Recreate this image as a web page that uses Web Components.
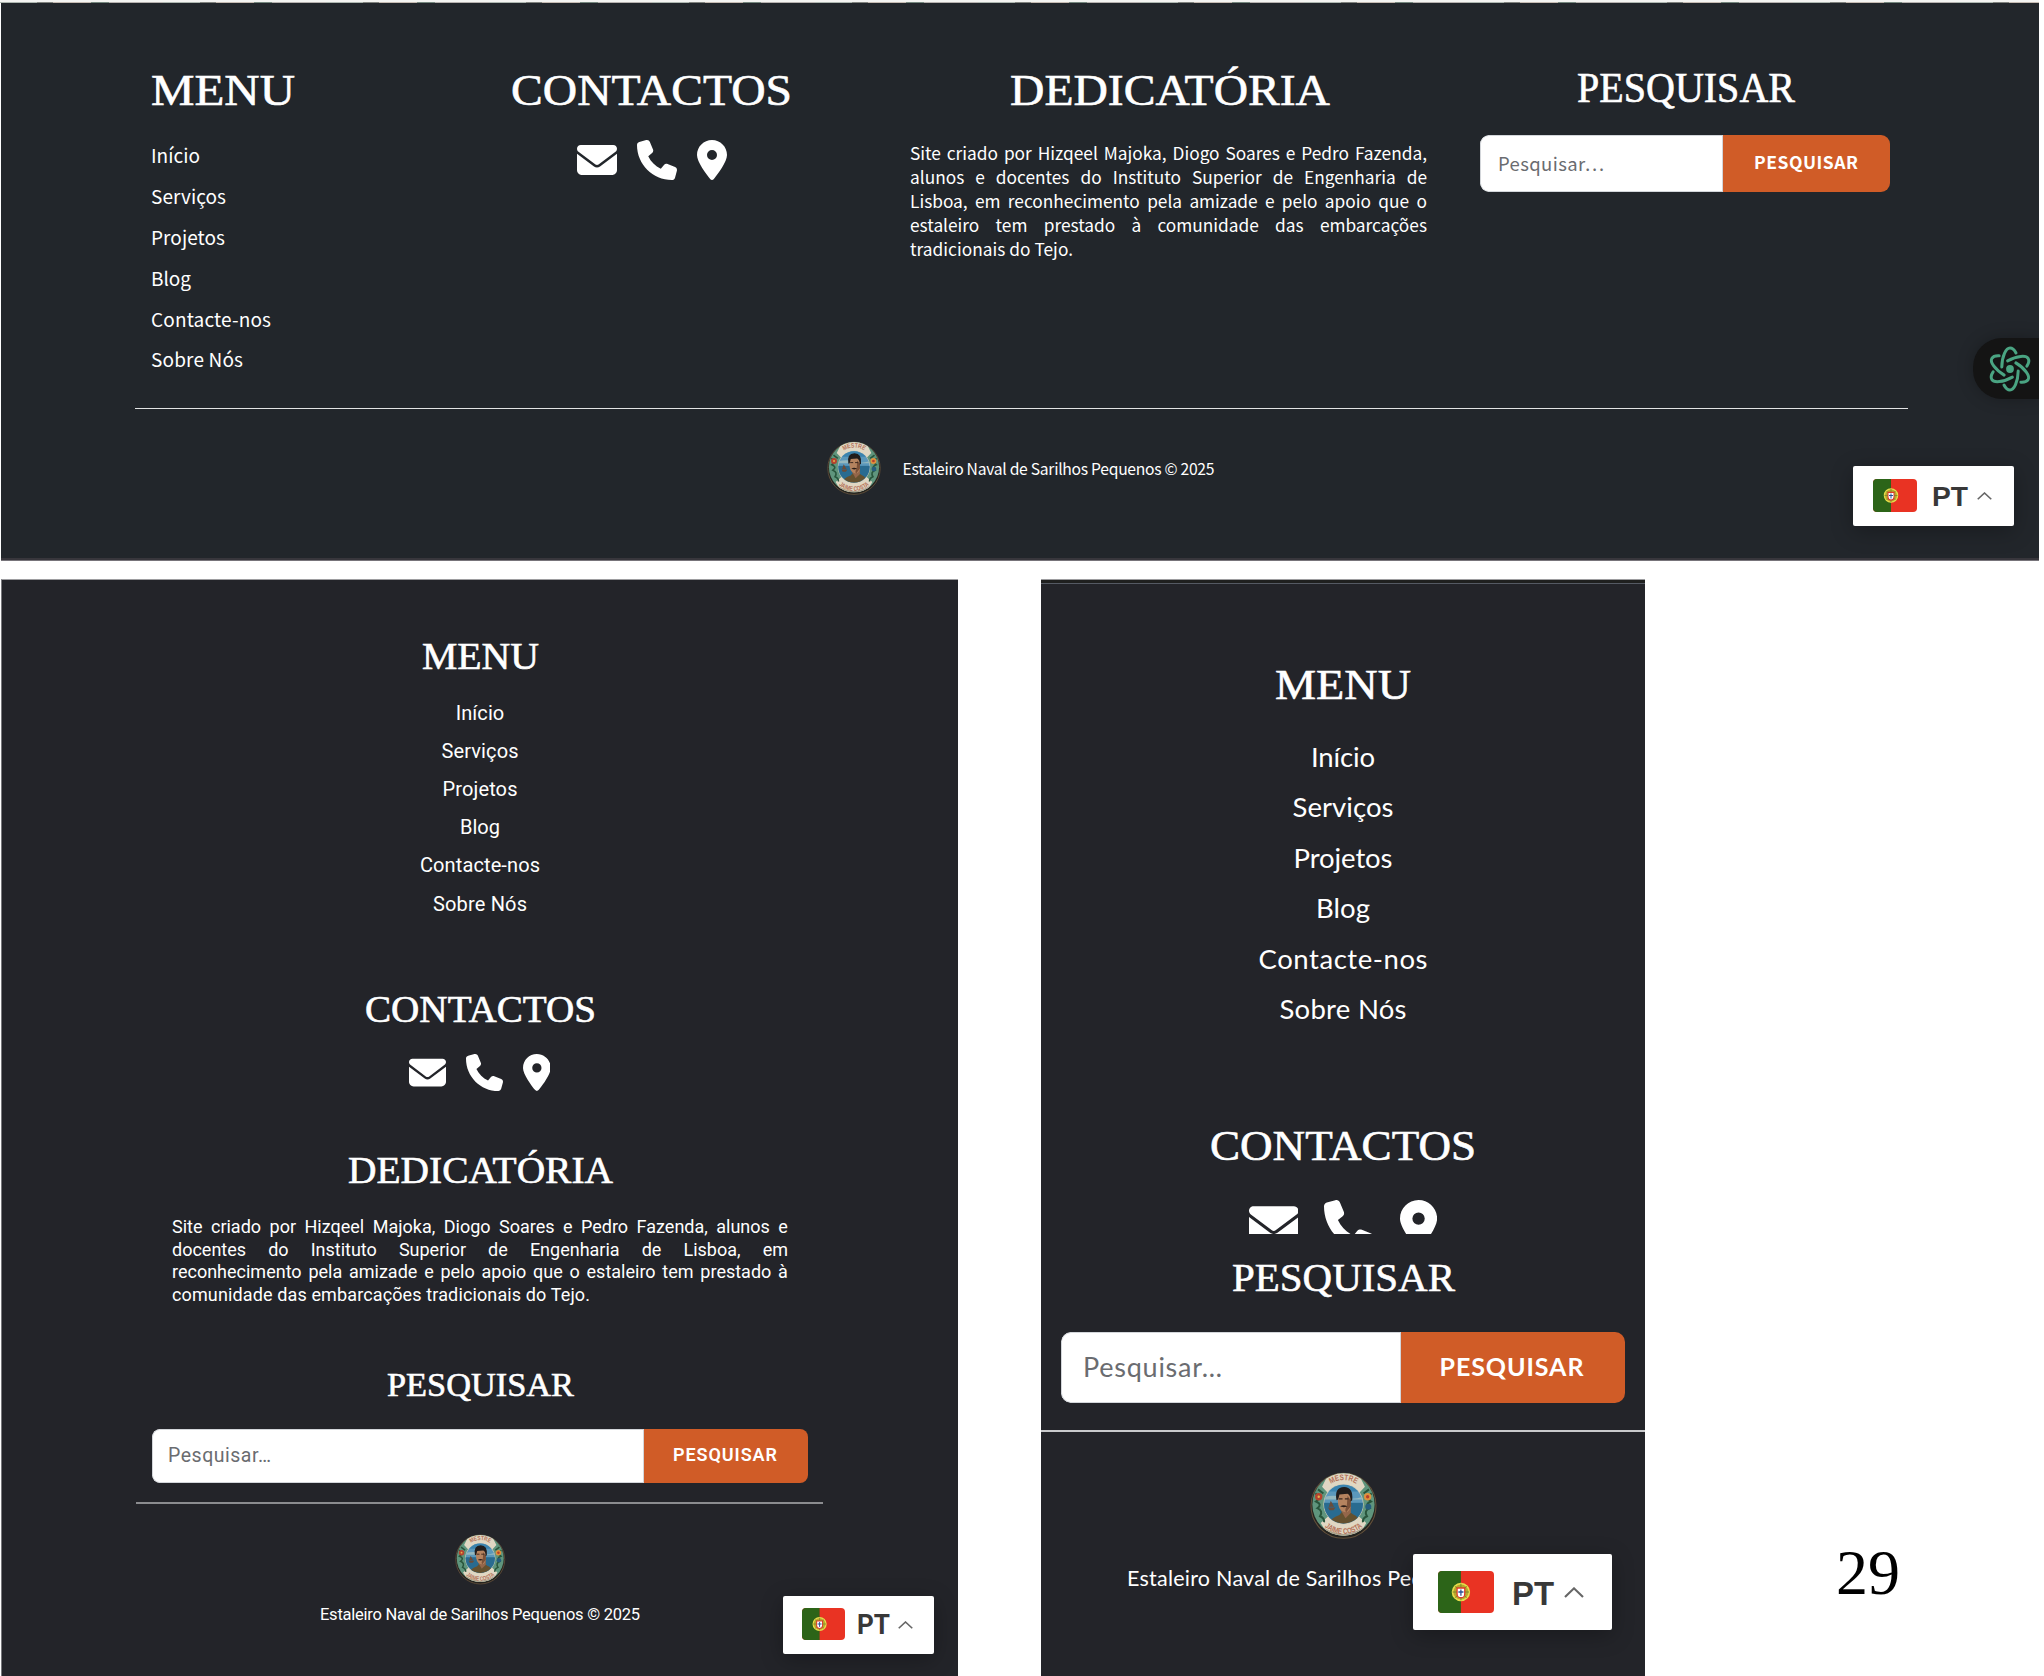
<!DOCTYPE html>
<html lang="pt">
<head>
<meta charset="utf-8">
<title>Estaleiro Naval de Sarilhos Pequenos</title>
<style>
html,body{margin:0;background:#fff}
body{width:2044px;height:1676px;overflow:hidden}
</style>
</head>
<body>
<slide-page></slide-page>
<script>
const define=(name,html,after)=>customElements.define(name,class extends HTMLElement{
  connectedCallback(){
    if(this.shadowRoot)return;
    this.attachShadow({mode:'open'}).innerHTML=typeof html==='function'?html(this):html;
    if(after)after(this);
  }
});

/* One line of text: the box is "h" high, its baseline is the bottom edge.
   Tracking spreads it to "w"; with "wide" the glyphs themselves are stretched. */
define('text-line',e=>`<style>
:host{display:block;line-height:0;white-space:nowrap}
i{display:inline-block;width:0;height:${e.getAttribute('h')}px}
</style><span><slot></slot></span><i></i>`,e=>{
  const w=+e.getAttribute('w');
  if(!w)return;
  const s=e.shadowRoot.querySelector('span');
  const n=s.getBoundingClientRect().width;
  if(e.hasAttribute('wide')){
    s.style.display='inline-block';
    s.style.transformOrigin='0 0';
    s.style.transform=`scaleX(${w/n})`;
    s.style.marginRight=(w-n)+'px';
    return;
  }
  const ls=(w-n)/(e.textContent.length-1);
  s.style.letterSpacing=ls+'px';
  s.style.marginRight=-ls+'px';
});

/* Justified line whose last word ends on the right edge. */
define('just-line',e=>`<style>
:host{display:flex;justify-content:space-between;align-items:flex-end;line-height:0;white-space:nowrap;height:${e.getAttribute('h')}px}
span{display:block;height:100%}
i{display:inline-block;width:0;height:${e.getAttribute('h')}px}
</style>${e.textContent.trim().split(' ').map(t=>`<span>${t}<i></i></span>`).join(' ')}`);

define('contact-icons',e=>{const s=+e.getAttribute('size');return `<style>
:host{display:flex;justify-content:center;gap:${e.getAttribute('gap')}px;height:${e.getAttribute('clip')||s}px;overflow:hidden}
svg{display:block;flex:none;height:${s}px;fill:#fff}
</style>
<svg viewBox="0 0 512 512"><path d="M48 64C21.5 64 0 85.5 0 112c0 15.1 7.1 29.3 19.2 38.4L236.8 313.6c11.4 8.5 27 8.5 38.4 0L492.8 150.4c12.1-9.1 19.2-23.3 19.2-38.4c0-26.5-21.5-48-48-48H48zM0 176V384c0 35.3 28.7 64 64 64H448c35.3 0 64-28.7 64-64V176L294.4 339.2c-22.8 17.1-54 17.1-76.8 0L0 176z"/></svg>
<svg viewBox="0 0 512 512"><path d="M164.9 24.6c-7.7-18.6-28-28.5-47.4-23.2l-88 24C12.1 30.2 0 46 0 64C0 311.4 200.6 512 448 512c18 0 33.8-12.1 38.6-29.5l24-88c5.3-19.4-4.6-39.7-23.2-47.4l-96-40c-16.3-6.8-35.2-2.1-46.3 11.6L304.7 368C234.3 334.7 177.3 277.7 144 207.3L193.3 167c13.7-11.2 18.4-30 11.6-46.3l-40-96z"/></svg>
<svg viewBox="0 0 384 512"><path d="M215.7 499.2C267 435 384 279.4 384 192C384 86 298 0 192 0S0 86 0 192c0 87.4 117 243 168.3 307.2c12.3 15.3 35.1 15.3 47.4 0zM192 128a64 64 0 1 1 0 128 64 64 0 1 1 0-128z"/></svg>`});

/* Search box: attributes give widths, heights and the two baselines. */
define('search-box',e=>{const a=n=>e.getAttribute(n);return `<style>
:host{display:flex;width:${a('w')}px;height:${a('height')}px;border-radius:${a('r')}px;overflow:hidden;box-sizing:border-box;text-align:left}
.f{width:${a('field')}px;background:#fff;color:#6a6c70;padding-left:${a('pad')}px;box-sizing:border-box;font-size:${a('fs')}px;box-shadow:inset 0 0 0 1px #d3d6da;border-radius:${a('r')}px 0 0 ${a('r')}px}
.b{flex:1;background:#d05c27;color:#fff;font-weight:${a('bw')||700};font-size:${a('bfs')}px;padding-left:${a('bpad')}px}
</style><div class="f"><text-line h="${a('fb')}" w="${a('fw')}">Pesquisar…</text-line></div><div class="b"><text-line h="${a('bb')}" w="${a('btw')}">PESQUISAR</text-line></div>`});

define('round-logo',e=>`<style>:host{display:block;width:${e.getAttribute('w')}px;height:${e.getAttribute('h')||e.getAttribute('w')}px}svg{display:block;width:100%;height:100%}text{font:bold 12px "Liberation Sans Narrow","Liberation Sans",sans-serif;fill:#b5745a}</style>
<svg viewBox="0 0 100 100" preserveAspectRatio="none">
<defs><clipPath id="c"><circle cx="50" cy="48" r="29"/></clipPath><clipPath id="o"><circle cx="50" cy="48.500" r="46.500"/></clipPath>
<path id="t" d="M16 46A34 34 0 0 1 84 46"/><path id="b" d="M7.500 50A42.500 42.500 0 0 0 92.500 50"/></defs>
<circle cx="50" cy="50.500" r="48.500" fill="#24231f" stroke="#63503a" stroke-width="1.600"/>
<g clip-path="url(#o)"><rect width="100" height="100" fill="#5f957d"/>
<path d="M18 22L33 38H67L82 22L70 -2H30ZM16 76L32 62H68L84 76L70 100H30Z" fill="#e0d7c3"/>
<path d="M8 32q9 6 1 12q10 4 2 10q9 4 4 12q7 3 6 9M92 32q-9 6-1 12q-10 4-2 10q-9 4-4 12q-7 3-6 9M12 26l8 6M88 26l-8 6" fill="none" stroke="#28553c" stroke-width="3"/>
<path d="M20 84Q50 104 80 84" fill="none" stroke="#aaa18d" stroke-width="3"/></g>
<circle cx="13" cy="37" r="5.500" fill="#b5432e"/><circle cx="13" cy="37" r="1.800" fill="#e6b24c"/>
<circle cx="86" cy="37" r="5.500" fill="#df913d"/><circle cx="86" cy="37" r="2.500" fill="#b63f2b"/><circle cx="87" cy="52" r="4.500" fill="#255d7d"/>
<circle cx="50" cy="48" r="30" fill="#cfcbb8"/>
<g clip-path="url(#c)"><rect x="18" y="16" width="64" height="64" fill="#5b98bb"/><path d="M18 18H82V29H18Z" fill="#3b83ae"/><path d="M18 38q18-5 32 0t32-2v5H18Z" fill="#94b8bf"/><rect x="18" y="46" width="64" height="32" fill="#296b90"/>
<path d="M31 43l5 9h-8ZM27 53h11l-3 4h-6Z" fill="#6a4c3a"/>
<path d="M27 80Q29 69 44 64L47 60H60L64 63Q74 67 77 80Z" fill="#65512f"/><path d="M46 57L53 69L61 61V52H46Z" fill="#94664a"/>
<path d="M41 34Q42 27 51 27Q61 28 61 38V49Q60 60 53 60Q44 59 42 48Z" fill="#b5835f"/>
<path d="M56 36L61 42V51L54 60Q51 58 55 50Z" fill="#7c5138"/>
<path d="M39.500 42Q36 23 51 22.500Q65 23 63 42L60.500 44Q61 35 56 32.500L44 33.500L42 41Z" fill="#211d1c"/><path d="M43 40h5.500M52 40h5.500" stroke="#3b281f" stroke-width="1.800"/><path d="M45 51.500Q50 48 56 51.500L50.500 52.700Z" fill="#2c1d17"/></g>
<text textLength="40" lengthAdjust="spacingAndGlyphs"><textPath href="#t" startOffset="50%" text-anchor="middle">MESTRE</textPath></text>
<text textLength="62" lengthAdjust="spacingAndGlyphs"><textPath href="#b" startOffset="50%" text-anchor="middle">JAIME COSTA</textPath></text>
</svg>`);

/* Language picker: a flag, a code and a chevron, with sizes in px. */
define('lang-pick',e=>{const a=n=>e.getAttribute(n);return `<style>
:host{position:absolute;display:flex;box-sizing:border-box;width:${a('w')}px;height:${a('h')}px;padding-top:${a('pt')}px;padding-left:${a('pl')}px;background:#fff;border-radius:2px;box-shadow:0 5px 22px rgba(0,0,0,.28);color:#383838;text-align:left}
svg{display:block;flex:none}
.f{width:${a('fw')}px;height:${a('k')}px;border-radius:4px}
.t{margin-left:${a('g')}px;font:bold ${a('fs')}px ${a('font')||'"Liberation Sans"'},sans-serif}
.c{margin-left:${a('cg')}px;margin-top:${a('ct')}px;width:${a('cw')}px;height:${a('ch')}px}
</style>
<svg class="f" viewBox="0 0 44 33" preserveAspectRatio="none"><rect width="44" height="33" fill="#e93323"/><rect width="18" height="33" fill="#2c6418"/>
<circle cx="18" cy="16.500" r="6.600" fill="#b8a82c" stroke="#e6dc4a" stroke-width="1.300"/><path d="M11.500 16.500h13M18 10v13M13.500 12l9 9M22.500 12l-9 9" stroke="#77832a" stroke-width=".7"/><path d="M14.500 12.800h7v5.200a3.500 3.500 0 0 1-7 0Z" fill="#dc3b2b"/><path d="M15.500 14h5v4a2.500 2.500 0 0 1-5 0Z" fill="#fff"/><path d="M18 14.500v5M16 16.500h4" stroke="#2d5193" stroke-width="1"/></svg>
<div class="t"><text-line wide h="${a('tb')}" w="${a('tw')}">PT</text-line></div>
<svg class="c" viewBox="0 0 14 8" preserveAspectRatio="none"><path d="M.7 7.300L7 1L13.300 7.300" fill="none" stroke="#666" stroke-width="1.500"/></svg>`});

define('atom-bubble',`<style>
:host{position:absolute;right:0;top:335px;width:66px;height:61px;border-radius:29px 0 0 29px;background:#141414;box-shadow:0 0 16px rgba(0,0,0,.25)}
svg{position:absolute;left:15px;top:7px;width:44px;height:48px}
</style><svg viewBox="-22 -24 44 48" fill="none" stroke="#4aa482" stroke-width="3" stroke-linecap="round">
<g id="a"><path d="M-8.200 -2C-8 -13 -4 -21 0 -21C2.500 -21 4.500 -19 6 -16"/><path d="M8.200 2C8 13 4 21 0 21C-2.500 21 -4.500 19 -6 16"/></g>
<use href="#a" transform="rotate(60)"/><use href="#a" transform="rotate(120)"/><circle r="3.900" fill="#4aa482" stroke="none"/></svg>`);

define('menu-list',e=>{const [p,...ws]=e.getAttribute('spec').split(' ');
const names=['Início','Serviços','Projetos','Blog','Contacte-nos','Sobre Nós'];
return `<style>:host{display:block}</style>`+names.map((n,i)=>`<text-line h="${i?p:e.getAttribute('first')}" w="${ws[i]}">${n}</text-line>`).join('')});

const base=`*{box-sizing:border-box}h2{margin:0;font-weight:400;font-family:"Liberation Serif",serif;-webkit-text-stroke:.6px #fff}hr{border:0;margin:0}`;

define('footer-wide',`<style>${base}
:host{display:block;position:relative;width:2038px;height:557px;margin-left:1px;background:#22262b;color:#fff;border-bottom:1px solid #77747a;box-shadow:inset 0 -2px #38363c;font-family:"Noto Sans CJK JP",sans-serif;overflow:hidden}
.cols{display:flex;padding-left:150px;height:404px}
h2{font-size:45px}
.c1{width:144px}.c2{width:281px;margin-left:216px;text-align:center}
.c3{width:517px;margin-left:118px;font-size:17.300px}.c3 h2{text-align:center;padding-left:2px}
.c4{width:410px;margin-left:53px;text-align:center}
contact-icons{margin-top:35px}
.c4 h2{font-size:42px;padding-left:2px}.c4 search-box{margin-top:33px}
menu-list{font-size:19px}
.c3 p{margin:31px 0 0;height:120px}
hr{width:1773px;height:1px;background:#e2e3e4;margin:1px 0 0 134px}
.bot{display:flex;padding:32px 0 0 826px;font-size:15.700px;gap:21.500px}
</style>
<div class="cols">
<div class="c1"><h2><text-line wide h="101.500" w="144">MENU</text-line></h2><menu-list first="58.700" spec="40.850 49 75 74 40 120 92"></menu-list></div>
<div class="c2"><h2><text-line wide h="101.500" w="281">CONTACTOS</text-line></h2><contact-icons size="40" gap="20"></contact-icons></div>
<div class="c3"><h2><text-line wide h="101.500" w="320">DEDICATÓRIA</text-line></h2>
<p><just-line h="24">Site criado por Hizqeel Majoka, Diogo Soares e Pedro Fazenda,</just-line><just-line h="24.200">alunos e docentes do Instituto Superior de Engenharia de</just-line><just-line h="24.200">Lisboa, em reconhecimento pela amizade e pelo apoio que o</just-line><just-line h="24.200">estaleiro tem prestado à comunidade das embarcações</just-line><text-line h="24.200" w="163">tradicionais do Tejo.</text-line></p></div>
<div class="c4"><h2><text-line wide h="98.500" w="218">PESQUISAR</text-line></h2><search-box w="410" height="57" r="9" field="243" pad="18" fs="18.500" fb="36" fw="106" bpad="31" bfs="17.500" bb="34.500" btw="104"></search-box></div>
</div>
<hr><div class="bot"><round-logo w="54"></round-logo><text-line h="34" w="312">Estaleiro Naval de Sarilhos Pequenos © 2025</text-line></div>
<atom-bubble></atom-bubble>
<lang-pick style="left:1852px;top:462.500px" w="161" h="60" pt="13" pl="20" fw="44" k="33" g="15" fs="27.500" tb="27" tw="36" cg="9" ct="13" cw="15" ch="8"></lang-pick>`);

define('footer-tablet',`<style>${base}
:host{display:block;position:relative;width:956px;height:1100px;margin-left:1px;background:#232429;color:#fff;border-top:1px solid #9d9da0;border-left:1px solid #77777b;font-family:Roboto,sans-serif;text-align:center;overflow:hidden}
h2{font-size:37px}menu-list{font-size:20px}
contact-icons{margin:31.500px 0 0 -1px}
p{margin:25.500px 0 0 170px;width:616px;font-size:18px;text-align:left}
.s{font-size:34px}
search-box{margin:32.500px 0 0 150px}
hr{width:687px;height:2px;background:#8b8c8f;margin:19.500px 0 0 134px}
round-logo{margin:30px 0 0 453px}
.n{font-size:16.500px}
</style>
<h2><text-line wide h="89" w="117">MENU</text-line></h2><menu-list first="51.300" spec="38.150 48.500 77 75 40 120 94"></menu-list>
<h2><text-line wide h="111.500" w="231">CONTACTOS</text-line></h2><contact-icons size="37" gap="20"></contact-icons>
<h2><text-line wide h="92.500" w="265">DEDICATÓRIA</text-line></h2>
<p><just-line h="24">Site criado por Hizqeel Majoka, Diogo Soares e Pedro Fazenda, alunos e</just-line><just-line h="22.900">docentes do Instituto Superior de Engenharia de Lisboa, em</just-line><just-line h="22.900">reconhecimento pela amizade e pelo apoio que o estaleiro tem prestado à</just-line><text-line h="22.900" w="418">comunidade das embarcações tradicionais do Tejo.</text-line></p>
<h2 class="s"><text-line wide h="95" w="187">PESQUISAR</text-line></h2>
<search-box w="656" height="54" r="8" field="492" pad="16" fs="19.500" fb="33" fw="103" bpad="29" bfs="18" bb="32" btw="104" bw="600"></search-box>
<hr><round-logo w="50.500"></round-logo><text-line class="n" h="35.500" w="320">Estaleiro Naval de Sarilhos Pequenos © 2025</text-line>
<lang-pick style="left:781px;top:1016px" w="151" h="58" pt="12.500" pl="19" fw="43" k="32" g="12" fs="27" tb="26" tw="33" cg="8" ct="13" cw="15" ch="8" font="Roboto"></lang-pick>`);

define('footer-phone',`<style>${base}
:host{display:block;position:relative;width:604px;height:1100px;margin-left:83px;background:#232429;color:#fff;border-top:1px solid #9d9da0;box-shadow:inset 0 3px #1f201f,inset 0 4px #555a63;font-family:Lato,sans-serif;text-align:center;overflow:hidden}
h2{font-size:42.500px}menu-list{font-size:27.500px}
contact-icons{margin-top:40px}
.s{font-size:41px}
search-box{margin:41px 0 0 20px}
hr{height:2px;background:#c9cacc;margin-top:27px}
round-logo{margin:40.500px auto 0}
.n{font-size:21.500px;text-align:left;margin-left:86px}
</style>
<h2><text-line wide h="119" w="136">MENU</text-line></h2><menu-list first="68.300" spec="50.500 64 101 99 54 169 127"></menu-list>
<h2><text-line wide h="140.500" w="266">CONTACTOS</text-line></h2><contact-icons size="49.500" gap="26" clip="34.500"></contact-icons>
<h2 class="s"><text-line wide h="56.500" w="223">PESQUISAR</text-line></h2>
<search-box w="564" height="71" r="10" field="340" pad="22" fs="27" fb="45.500" fw="139" bpad="38.500" bfs="25" bb="44" btw="144"></search-box>
<hr><round-logo w="67" h="67"></round-logo><text-line class="n" h="46.500" w="435">Estaleiro Naval de Sarilhos Pequenos © 2025</text-line>
<lang-pick style="left:372px;top:974.500px" w="199" h="76" pt="17" pl="25" fw="56" k="42" g="18" fs="34" tb="34" tw="42" cg="10" ct="16" cw="20" ch="11"></lang-pick>`);

define('slide-page',`<style>
:host{display:block;width:2044px;height:1676px;overflow:hidden;background:#fff}
.edge{height:2px;width:2039px;background:#f4f4f2}
.strip{height:1px;width:2039px;background:linear-gradient(#fff3,#fff3),repeating-linear-gradient(90deg,#9aa59d 0 37px,#61645f 37px 53px,#b7aaa0 53px 91px,#53695e 91px 109px,#a49f9c 109px 163px)}
.row{display:flex;margin-top:17.500px}
.num{margin-left:191px;color:#000;font:64px "Liberation Serif",serif}
</style>
<div class="edge"></div><div class="strip"></div>
<footer-wide></footer-wide>
<div class="row"><footer-tablet></footer-tablet><footer-phone></footer-phone><div class="num"><text-line h="1015" w="64">29</text-line></div></div>`);
</script>
</body>
</html>
